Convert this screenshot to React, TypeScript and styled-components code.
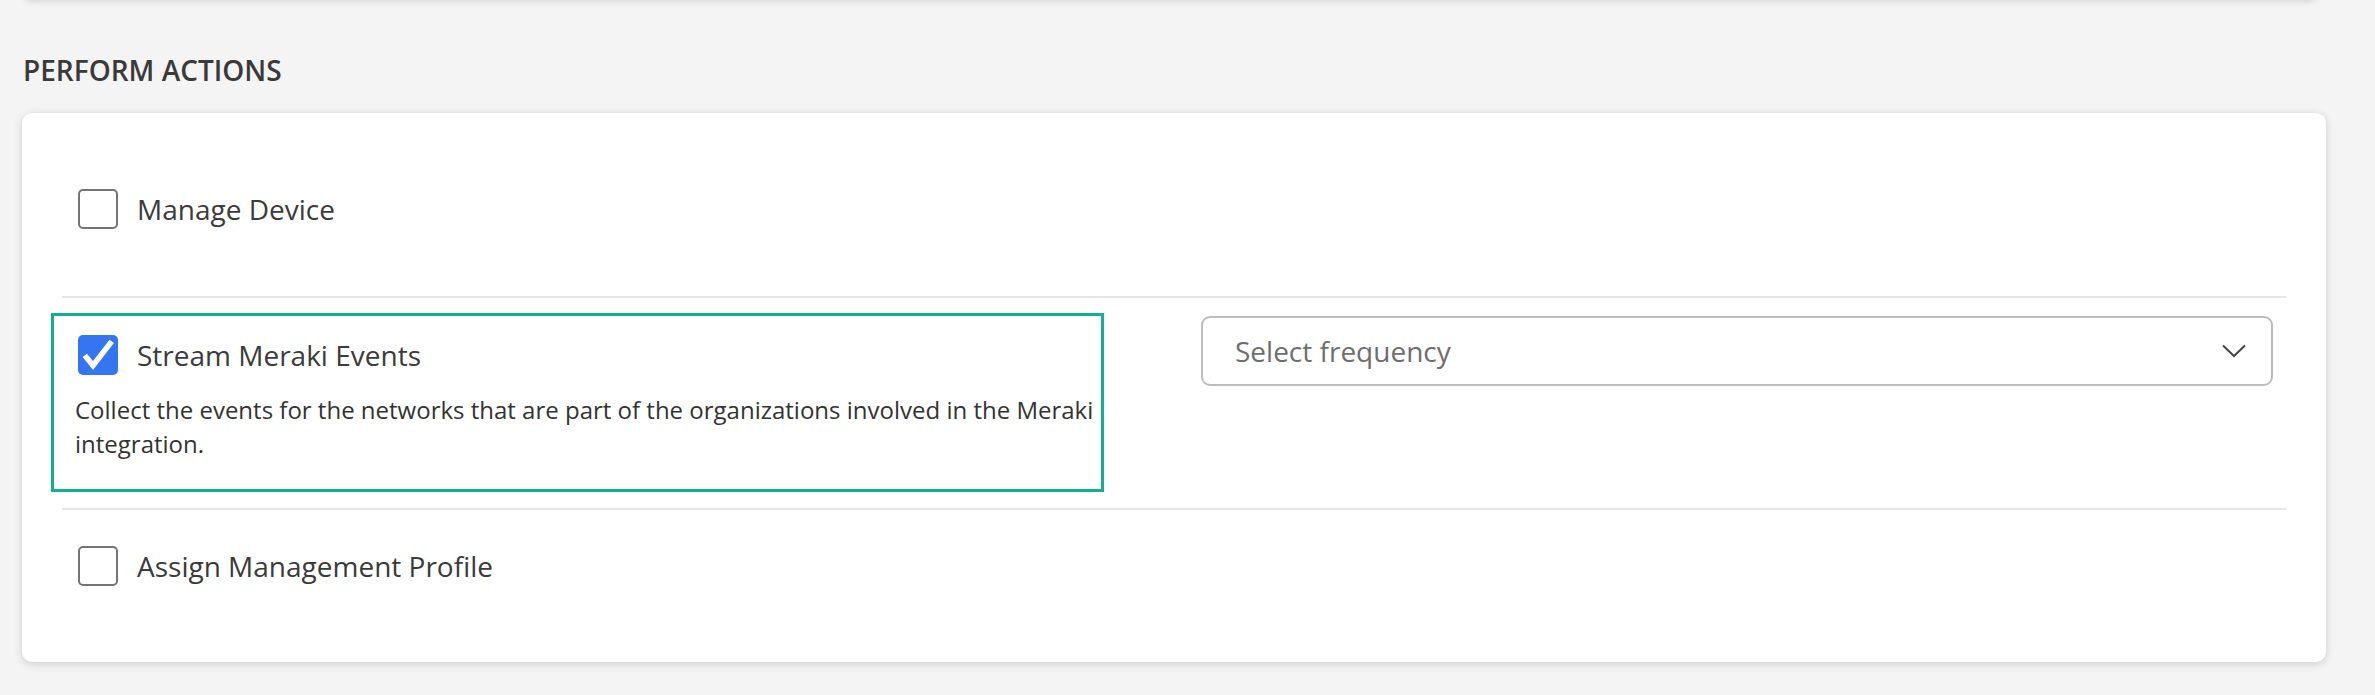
import React, { FC } from 'react'
import styled, { createGlobalStyle } from 'styled-components'

const GlobalStyle = createGlobalStyle`
    * {
        box-sizing: border-box;
    }
    body {
        margin: 0;
        background: #f4f4f4;
        font-family: "Open Sans", "Noto Sans", sans-serif;
        color: #3b3b3b;
    }
`

const Page = styled.div`
    padding: 0 49px 40px 22px;
    overflow: hidden;
`

const PreviousPanel = styled.div`
    height: 20px;
    margin: -20px 8px 0 0;
    background: #ffffff;
    border-radius: 10px;
    box-shadow: 0 2px 6px rgba(0, 0, 0, 0.12);
`

const SectionTitle = styled.h2`
    margin: 52px 0 25px 1px;
    font-size: 28px;
    line-height: 36px;
    font-weight: 600;
    color: #3a3a3a;
    text-transform: uppercase;
`

const Card = styled.section`
    background: #ffffff;
    border-radius: 10px;
    padding: 8px 29px;
    box-shadow: 0 2px 8px rgba(0, 0, 0, 0.16);
`

const Row = styled.div<{ $top: number; $bottom: number }>`
    display: grid;
    grid-template-columns: 1053px 1072px;
    column-gap: 97px;
    align-items: start;
    padding: ${p => p.$top}px 0 ${p => p.$bottom}px;
`

const Divider = styled.hr`
    margin: 0 11px;
    border: none;
    height: 2px;
    background: #e6e6ea;
`

const Option = styled.div<{ $active?: boolean }>`
    border: 3px solid ${p => (p.$active ? '#12b08e' : 'transparent')};
    padding: 19px 6px 19px 21px;
    padding-bottom: ${p => (p.$active ? 28 : 19)}px;
`

const OptionHead = styled.label`
    display: flex;
    align-items: center;
    gap: 19px;
    margin-left: 3px;
    cursor: pointer;
`

const Box = styled.span<{ $checked?: boolean }>`
    flex: none;
    width: 40px;
    height: 40px;
    border-radius: 5px;
    display: flex;
    align-items: center;
    justify-content: center;
    background: ${p => (p.$checked ? '#3476f2' : '#ffffff')};
    border: ${p => (p.$checked ? 'none' : '2px solid #747474')};
`

const Label = styled.span`
    font-size: 28px;
    line-height: 40px;
    color: #3b3b3b;
`

const Description = styled.p`
    margin: 18px 0 0;
    font-size: 24px;
    line-height: 34px;
    color: #333333;
`

const Select = styled.button`
    margin-top: 3px;
    height: 70px;
    width: 100%;
    display: flex;
    align-items: center;
    justify-content: space-between;
    padding: 0 25px 0 32px;
    background: #ffffff;
    border: 2px solid #bdbdbd;
    border-radius: 9px;
    font-family: inherit;
    cursor: pointer;
`

const Placeholder = styled.span`
    font-size: 28px;
    color: #6e6e6e;
`

const CheckMark: FC = () => (
    <svg width="40" height="40" viewBox="0 0 40 40">
        <polyline points="8.5,22.5 15,30.5 32,8.5" fill="none" stroke="#ffffff" strokeWidth="5.5" strokeLinecap="square" strokeLinejoin="miter" />
    </svg>
)

const Chevron: FC = () => (
    <svg width="24" height="14" viewBox="0 0 24 14">
        <polyline points="1,1.5 12,12 23,1.5" fill="none" stroke="#454545" strokeWidth="2" />
    </svg>
)

type ActionProps = {
    label: string
    checked?: boolean
    description?: string
}

const Action: FC<ActionProps> = ({ label, checked, description }) => (
    <Option $active={checked}>
        <OptionHead>
            <Box $checked={checked}>{checked && <CheckMark />}</Box>
            <Label>{label}</Label>
        </OptionHead>
        {description && <Description>{description}</Description>}
    </Option>
)

const App: FC = () => {
    return (
        <Page>
            <GlobalStyle />
            <PreviousPanel />
            <SectionTitle>Perform Actions</SectionTitle>
            <Card>
                <Row $top={46} $bottom={45}>
                    <Action label="Manage Device" />
                </Row>
                <Divider />
                <Row $top={15} $bottom={16}>
                    <Action
                        label="Stream Meraki Events"
                        checked
                        description="Collect the events for the networks that are part of the organizations involved in the Meraki integration."
                    />
                    <Select type="button">
                        <Placeholder>Select frequency</Placeholder>
                        <Chevron />
                    </Select>
                </Row>
                <Divider />
                <Row $top={14} $bottom={46}>
                    <Action label="Assign Management Profile" />
                </Row>
            </Card>
        </Page>
    )
}

export default App
